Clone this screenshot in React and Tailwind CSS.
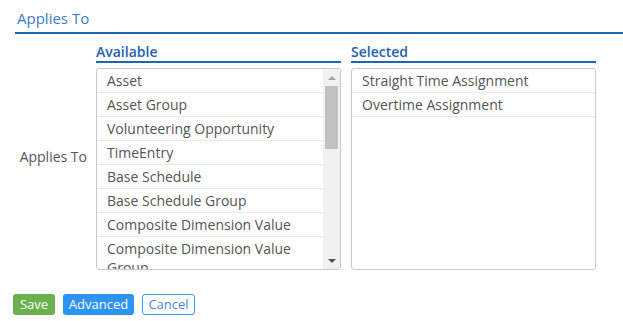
import React from 'react';

const available = [
  'Asset',
  'Asset Group',
  'Volunteering Opportunity',
  'TimeEntry',
  'Base Schedule',
  'Base Schedule Group',
  'Composite Dimension Value',
  'Composite Dimension Value Group',
];

const selected = ['Straight Time Assignment', 'Overtime Assignment'];

function Row({ children }) {
  return (
    <div className="border-b border-[#e8e8e8] px-[10px] py-[2px] text-[14px] leading-[19px] text-[#555]">
      {children}
    </div>
  );
}

function ColumnHeader({ children }) {
  return (
    <div className="mb-[5px] border-b-2 border-[#1b67b8] text-[14px] font-semibold leading-[18px] text-[#1f62b0]">
      {children}
    </div>
  );
}

export default function App() {
  return (
    <div className="h-[321px] w-[623px] overflow-hidden bg-white font-['Open_Sans',sans-serif]">
      {/* Section header */}
      <div className="ml-[15px] border-b-2 border-[#1b67b8] pt-[8px]">
        <h2 className="pb-[4px] pl-[2px] text-[15px] leading-[20px] text-[#3a7bc8]">Applies To</h2>
      </div>

      {/* Form row */}
      <div className="mt-[9px] flex items-center">
        <div className="w-[96px] pr-[9px] text-right text-[14px] leading-[19px] text-[#555]">Applies To</div>

        <div className="flex gap-[10px]">
          <div className="w-[245px]">
            <ColumnHeader>Available</ColumnHeader>
            <div className="flex h-[202px] overflow-hidden rounded-[3px] border border-[#c8c8c8]">
              <div className="flex-1 overflow-hidden">
                {available.map((item) => (
                  <Row key={item}>{item}</Row>
                ))}
              </div>
              {/* scrollbar */}
              <div className="flex w-[17px] flex-col items-center bg-[#f1f1f1]">
                <div className="flex h-[17px] w-full items-center justify-center">
                  <div className="h-0 w-0 border-x-[4px] border-b-[4px] border-x-transparent border-b-[#a3a3a3]" />
                </div>
                <div className="h-[63px] w-[13px] bg-[#c1c1c1]" />
                <div className="flex-1" />
                <div className="flex h-[17px] w-full items-center justify-center">
                  <div className="h-0 w-0 border-x-[4px] border-t-[4px] border-x-transparent border-t-[#505050]" />
                </div>
              </div>
            </div>
          </div>

          <div className="w-[245px]">
            <ColumnHeader>Selected</ColumnHeader>
            <div className="h-[202px] overflow-hidden rounded-[3px] border border-[#c8c8c8]">
              {selected.map((item) => (
                <Row key={item}>{item}</Row>
              ))}
            </div>
          </div>
        </div>
      </div>

      {/* Actions */}
      <div className="mt-[24px] flex gap-[8px] pl-[13px]">
        <button className="h-[21px] w-[42px] rounded-[3px] bg-[#6ab04c] text-center text-[13px] leading-[21px] text-white">Save</button>
        <button className="h-[21px] w-[71px] rounded-[3px] bg-[#2d93f5] text-center text-[13px] leading-[21px] text-white">Advanced</button>
        <button className="h-[21px] w-[53px] rounded-[3px] border border-[#3a97f0] bg-white text-center text-[13px] leading-[19px] text-[#4a88dd]">Cancel</button>
      </div>
    </div>
  );
}
